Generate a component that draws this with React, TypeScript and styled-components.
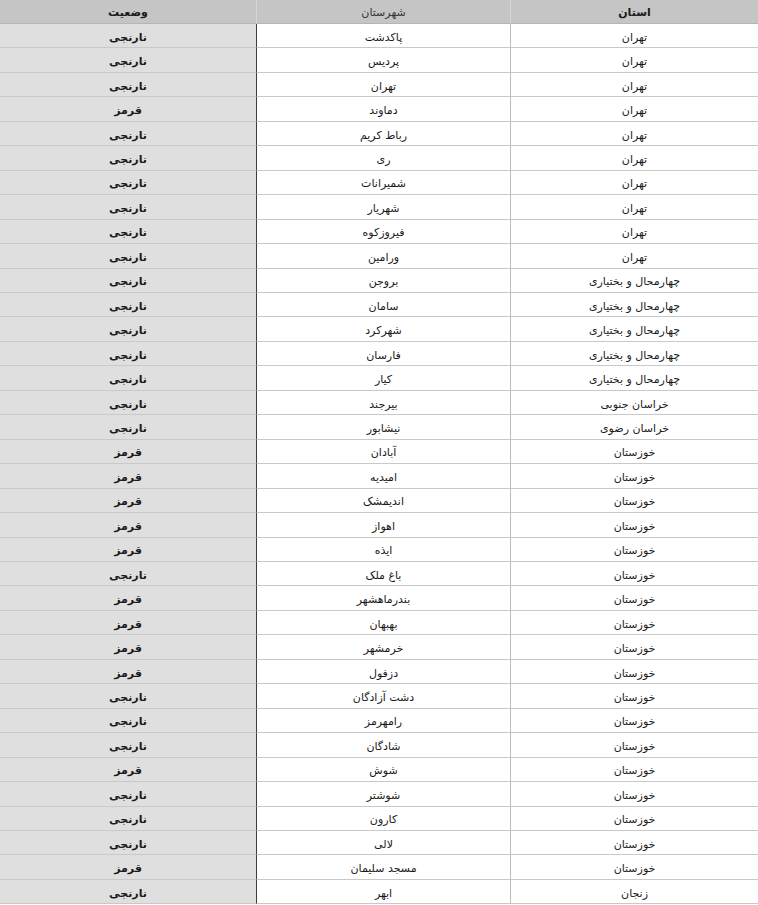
import { Fragment } from "react";
import styled, { createGlobalStyle } from "styled-components";

const GlobalStyle = createGlobalStyle`
  html, body {
    margin: 0;
    padding: 0;
    background: #ffffff;
  }
  body {
    font-family: "DejaVu Sans", "Noto Sans", sans-serif;
  }
`;

type Row = [string, string, string];

const rows: Row[] = [
  ["تهران", "پاکدشت", "نارنجی"],
  ["تهران", "پردیس", "نارنجی"],
  ["تهران", "تهران", "نارنجی"],
  ["تهران", "دماوند", "قرمز"],
  ["تهران", "رباط کریم", "نارنجی"],
  ["تهران", "ری", "نارنجی"],
  ["تهران", "شمیرانات", "نارنجی"],
  ["تهران", "شهریار", "نارنجی"],
  ["تهران", "فیروزکوه", "نارنجی"],
  ["تهران", "ورامین", "نارنجی"],
  ["چهارمحال و بختیاری", "بروجن", "نارنجی"],
  ["چهارمحال و بختیاری", "سامان", "نارنجی"],
  ["چهارمحال و بختیاری", "شهرکرد", "نارنجی"],
  ["چهارمحال و بختیاری", "فارسان", "نارنجی"],
  ["چهارمحال و بختیاری", "کیار", "نارنجی"],
  ["خراسان جنوبی", "بیرجند", "نارنجی"],
  ["خراسان رضوی", "نیشابور", "نارنجی"],
  ["خوزستان", "آبادان", "قرمز"],
  ["خوزستان", "امیدیه", "قرمز"],
  ["خوزستان", "اندیمشک", "قرمز"],
  ["خوزستان", "اهواز", "قرمز"],
  ["خوزستان", "ایذه", "قرمز"],
  ["خوزستان", "باغ ملک", "نارنجی"],
  ["خوزستان", "بندرماهشهر", "قرمز"],
  ["خوزستان", "بهبهان", "قرمز"],
  ["خوزستان", "خرمشهر", "قرمز"],
  ["خوزستان", "دزفول", "قرمز"],
  ["خوزستان", "دشت آزادگان", "نارنجی"],
  ["خوزستان", "رامهرمز", "نارنجی"],
  ["خوزستان", "شادگان", "نارنجی"],
  ["خوزستان", "شوش", "قرمز"],
  ["خوزستان", "شوشتر", "نارنجی"],
  ["خوزستان", "کارون", "نارنجی"],
  ["خوزستان", "لالی", "نارنجی"],
  ["خوزستان", "مسجد سلیمان", "قرمز"],
  ["زنجان", "ابهر", "نارنجی"],
];

const Table = styled.div`
  direction: rtl;
  width: 758px;
  display: grid;
  grid-template-columns: 248px 254px 256px;
  font-size: 11px;
  color: #1a1a1a;
`;

const HeadCell = styled.div<{ $bold?: boolean; $last?: boolean }>`
  height: 24px;
  padding-top: 1px;
  display: flex;
  align-items: center;
  justify-content: center;
  background: #c5c5c5;
  font-weight: ${(p) => (p.$bold ? 700 : 400)};
  color: ${(p) => (p.$bold ? "#1a1a1a" : "#333333")};
  border-left: ${(p) => (p.$last ? "none" : "1px solid #d6d6d6")};
  border-bottom: 1px solid #b5b5b5;
  box-sizing: border-box;
`;

const Cell = styled.div<{ $status?: boolean; $mid?: boolean }>`
  height: 24.46px;
  padding-top: 3px;
  display: flex;
  align-items: center;
  justify-content: center;
  box-sizing: border-box;
  border-bottom: 1px solid #c9c9c9;
  background: ${(p) => (p.$status ? "#dfdfdf" : "#ffffff")};
  font-weight: ${(p) => (p.$status ? 700 : 400)};
  border-left: ${(p) =>
    p.$mid ? "1px solid #3c3c3c" : p.$status ? "none" : "1px solid #bdbdbd"};
`;

export default function App() {
  return (
    <>
      <GlobalStyle />
      <Table>
        <HeadCell $bold>استان</HeadCell>
        <HeadCell>شهرستان</HeadCell>
        <HeadCell $bold $last>
          وضعیت
        </HeadCell>
        {rows.map(([province, city, status], i) => (
          <Fragment key={i}>
            <Cell>{province}</Cell>
            <Cell $mid>{city}</Cell>
            <Cell $status>{status}</Cell>
          </Fragment>
        ))}
      </Table>
    </>
  );
}
